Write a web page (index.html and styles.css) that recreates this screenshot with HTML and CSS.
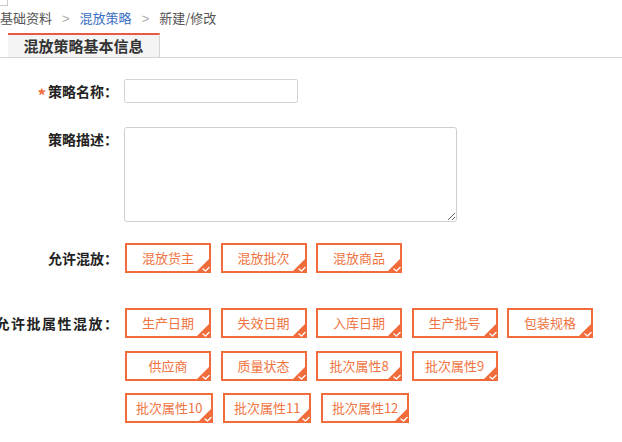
FILE: index.html
```html
<!DOCTYPE html>
<html lang="zh-CN">
<head>
<meta charset="utf-8">
<title>混放策略 - 新建/修改</title>
<link rel="stylesheet" href="styles.css">
</head>
<body>
<div class="corner"></div>
<div class="breadcrumb">
  <span class="crumb">基础资料</span><span class="sep">&gt;</span><span class="crumb link">混放策略</span><span class="sep">&gt;</span><span class="crumb">新建/修改</span>
</div>
<div class="tabs">
  <div class="tab active">混放策略基本信息</div>
</div>
<div class="form">
  <div class="row row-name">
    <div class="label"><span class="star">*</span>策略名称：</div>
    <input class="text-input" type="text">
  </div>
  <div class="row row-desc">
    <div class="label">策略描述：</div>
    <textarea class="text-area"></textarea>
  </div>
  <div class="row row-mix">
    <div class="label">允许混放：</div>
    <div class="chips">
      <div class="chip-line">
        <div class="chip">混放货主<svg class="tick" viewBox="0 0 16 16"><polygon points="16,0 16,16 0,16"/><polyline points="8,12 10.5,14 14,10.5"/></svg></div>
        <div class="chip">混放批次<svg class="tick" viewBox="0 0 16 16"><polygon points="16,0 16,16 0,16"/><polyline points="8,12 10.5,14 14,10.5"/></svg></div>
        <div class="chip">混放商品<svg class="tick" viewBox="0 0 16 16"><polygon points="16,0 16,16 0,16"/><polyline points="8,12 10.5,14 14,10.5"/></svg></div>
      </div>
    </div>
  </div>
  <div class="row row-attr">
    <div class="label label-long">允许批属性混放：</div>
    <div class="chips">
      <div class="chip-line">
        <div class="chip">生产日期<svg class="tick" viewBox="0 0 16 16"><polygon points="16,0 16,16 0,16"/><polyline points="8,12 10.5,14 14,10.5"/></svg></div>
        <div class="chip">失效日期<svg class="tick" viewBox="0 0 16 16"><polygon points="16,0 16,16 0,16"/><polyline points="8,12 10.5,14 14,10.5"/></svg></div>
        <div class="chip">入库日期<svg class="tick" viewBox="0 0 16 16"><polygon points="16,0 16,16 0,16"/><polyline points="8,12 10.5,14 14,10.5"/></svg></div>
        <div class="chip">生产批号<svg class="tick" viewBox="0 0 16 16"><polygon points="16,0 16,16 0,16"/><polyline points="8,12 10.5,14 14,10.5"/></svg></div>
        <div class="chip">包装规格<svg class="tick" viewBox="0 0 16 16"><polygon points="16,0 16,16 0,16"/><polyline points="8,12 10.5,14 14,10.5"/></svg></div>
      </div>
      <div class="chip-line">
        <div class="chip">供应商<svg class="tick" viewBox="0 0 16 16"><polygon points="16,0 16,16 0,16"/><polyline points="8,12 10.5,14 14,10.5"/></svg></div>
        <div class="chip">质量状态<svg class="tick" viewBox="0 0 16 16"><polygon points="16,0 16,16 0,16"/><polyline points="8,12 10.5,14 14,10.5"/></svg></div>
        <div class="chip">批次属性8<svg class="tick" viewBox="0 0 16 16"><polygon points="16,0 16,16 0,16"/><polyline points="8,12 10.5,14 14,10.5"/></svg></div>
        <div class="chip">批次属性9<svg class="tick" viewBox="0 0 16 16"><polygon points="16,0 16,16 0,16"/><polyline points="8,12 10.5,14 14,10.5"/></svg></div>
      </div>
      <div class="chip-line">
        <div class="chip">批次属性10<svg class="tick" viewBox="0 0 16 16"><polygon points="16,0 16,16 0,16"/><polyline points="8,12 10.5,14 14,10.5"/></svg></div>
        <div class="chip">批次属性11<svg class="tick" viewBox="0 0 16 16"><polygon points="16,0 16,16 0,16"/><polyline points="8,12 10.5,14 14,10.5"/></svg></div>
        <div class="chip">批次属性12<svg class="tick" viewBox="0 0 16 16"><polygon points="16,0 16,16 0,16"/><polyline points="8,12 10.5,14 14,10.5"/></svg></div>
      </div>
    </div>
  </div>
</div>
</body>
</html>
```

FILE: styles.css
```css
html, body {
  margin: 0;
  padding: 0;
  background: #ffffff;
}
body {
  position: relative;
  font-family: "Noto Sans CJK SC", "Liberation Sans", sans-serif;
  color: #333333;
  width: 622px;
  height: 442px;
  overflow: hidden;
}
.corner {
  position: absolute;
  left: 0;
  top: 0;
  width: 7px;
  height: 5px;
  border-right: 1px solid #c8c8c8;
  border-bottom: 1px solid #c8c8c8;
}
.breadcrumb {
  padding-top: 8px;
  height: 20px;
  line-height: 20px;
  font-size: 13px;
  color: #555555;
  white-space: nowrap;
}
.crumb.link {
  color: #3a6fc4;
}
.sep {
  color: #aaaaaa;
  padding: 0 10px;
  font-family: "Liberation Sans", sans-serif;
}
.tabs {
  display: flex;
  margin-top: 5px;
  border-bottom: 1px solid #d6d6d6;
}
.tab {
  margin-left: 8px;
  width: 151px;
  height: 22px;
  line-height: 22px;
  text-align: center;
  font-size: 15px;
  font-weight: bold;
  color: #333333;
  background: #f4f4f4;
  border-top: 2px solid #e85a46;
  border-right: 1px solid #d6d6d6;
}
.form {
  padding-top: 21px;
}
.row {
  display: flex;
  align-items: flex-start;
}
.label {
  width: 118px;
  margin-right: 6px;
  flex-shrink: 0;
  display: flex;
  align-items: center;
  justify-content: flex-end;
  white-space: nowrap;
  font-size: 14px;
  font-weight: bold;
  color: #222222;
}
.label-long {
  letter-spacing: 1.5px;
  margin-right: 4.5px;
  width: 119.5px;
}
.star {
  color: #f26b3a;
  margin-right: 2px;
  font-size: 17px;
  line-height: 1;
  padding-top: 7px;
}
.row-name .label {
  height: 24px;
}
.text-input {
  box-sizing: border-box;
  width: 174px;
  height: 24px;
  border: 1px solid #d4d4d4;
  border-radius: 2px;
  margin: 0;
  padding: 0 4px;
  font-size: 12px;
}
.row-desc {
  margin-top: 24px;
}
.row-desc .label {
  height: 24px;
}
.text-area {
  box-sizing: border-box;
  width: 333px;
  height: 95px;
  border: 1px solid #cfcfcf;
  border-radius: 3px;
  margin: 0;
  padding: 4px;
  font-size: 12px;
  resize: both;
}
.row-mix {
  margin-top: 21px;
}
.row-mix .label,
.row-attr .label {
  height: 30px;
}
.row-attr {
  margin-top: 35px;
}
.chips {
  display: flex;
  flex-direction: column;
  row-gap: 12.5px;
  padding-left: 1px;
}
.chip-line {
  display: flex;
  column-gap: 9.5px;
}
.chip {
  position: relative;
  box-sizing: border-box;
  min-width: 86px;
  height: 30px;
  padding: 0 9px;
  border: 2px solid #f26b3a;
  line-height: 26px;
  text-align: center;
  font-size: 13px;
  color: #f0743f;
  white-space: nowrap;
  background: #ffffff;
}
.tick {
  position: absolute;
  right: -2px;
  bottom: -2px;
  width: 16px;
  height: 16px;
}
.tick polygon {
  fill: #f26b3a;
}
.tick polyline {
  fill: none;
  stroke: #ffffff;
  stroke-width: 1.4;
  stroke-linecap: round;
  stroke-linejoin: round;
}
```
